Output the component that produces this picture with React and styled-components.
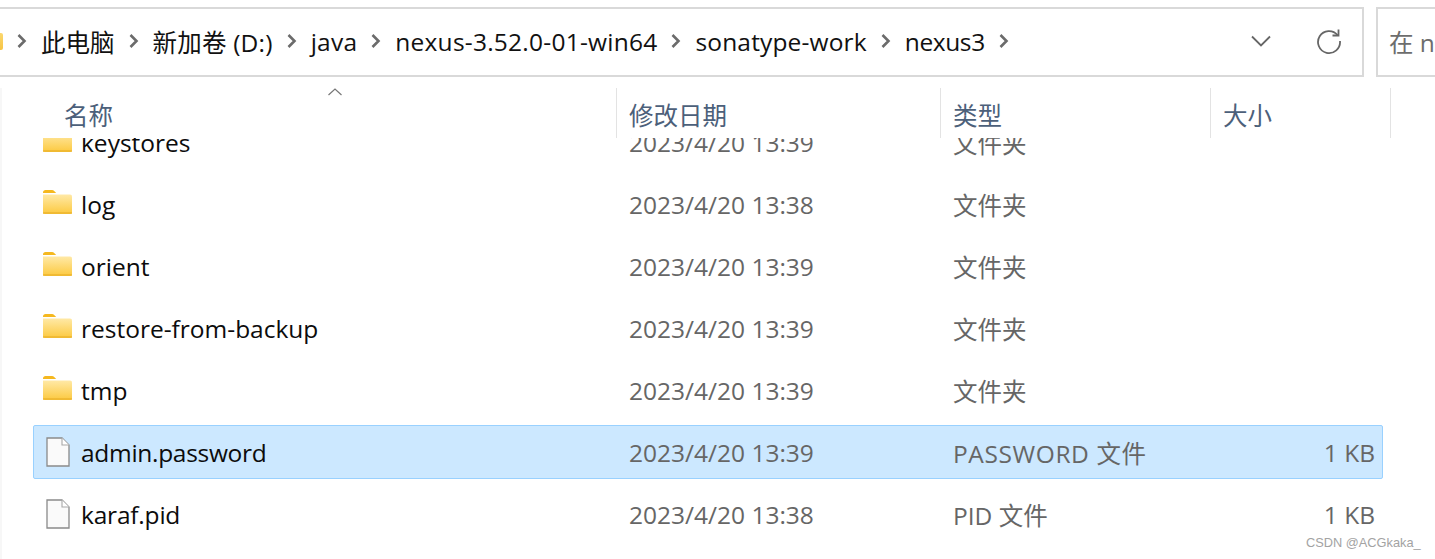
import React from 'react';
import styled, { createGlobalStyle } from 'styled-components';

const crumbs = [
  { label: '此电脑', track: 0 },
  { label: '新加卷 (D:)', track: 0.2 },
  { label: 'java', track: 0.25 },
  { label: 'nexus-3.52.0-01-win64', track: 0.24 },
  { label: 'sonatype-work', track: 0.16 },
  { label: 'nexus3', track: -0.4 },
];

const files = [
  { name: 'keystores', date: '2023/4/20 13:39', type: '文件夹', kind: 'folder' },
  { name: 'log', date: '2023/4/20 13:38', type: '文件夹', kind: 'folder' },
  { name: 'orient', date: '2023/4/20 13:39', type: '文件夹', kind: 'folder' },
  { name: 'restore-from-backup', date: '2023/4/20 13:39', type: '文件夹', kind: 'folder' },
  { name: 'tmp', date: '2023/4/20 13:39', type: '文件夹', kind: 'folder' },
  { name: 'admin.password', date: '2023/4/20 13:39', type: 'PASSWORD 文件', typeTrack: 0.6, size: '1 KB', kind: 'file', nameTrack: -0.3, selected: true },
  { name: 'karaf.pid', date: '2023/4/20 13:38', type: 'PID 文件', size: '1 KB', kind: 'file', nameTrack: -0.2 },
];

const GlobalStyle = createGlobalStyle`
  html, body {
    margin: 0;
    height: 559px;
    overflow: hidden;
    background: #fff;
  }
  body {
    font-family: "Open Sans", "Noto Sans CJK SC", sans-serif;
  }
`;

const Page = styled.div`
  position: relative;
  width: 1435px;
  height: 559px;
  overflow: hidden;
  font-size: 24.5px;
`;

const Toolbar = styled.div`
  display: flex;
  gap: 12px;
  height: 70px;
  padding-top: 7px;
  margin-left: -2px;
  width: 1500px;
`;

const AddressBar = styled.div`
  display: flex;
  align-items: center;
  box-sizing: border-box;
  width: 1366px;
  flex-shrink: 0;
  border: 2px solid #d9d9d9;
  border-left: 0;
  padding-bottom: 2px;
`;

const FolderStub = styled.div`
  width: 5px;
  height: 17px;
  background: linear-gradient(#fbd86f, #f7c444);
  border-radius: 0 2px 2px 0;
`;

const Crumb = styled.span`
  color: #111;
  white-space: nowrap;
  letter-spacing: ${(p) => p.$track}px;
`;

const CrumbArrow = styled.svg`
  width: 12px;
  height: 18px;
  margin: 0 13px;
  flex-shrink: 0;
  fill: none;
  stroke: #6b6b6b;
  stroke-width: 2.6;
`;

const BarButtons = styled.div`
  display: flex;
  align-items: center;
  gap: 42px;
  margin-left: auto;
  margin-right: 20px;
`;

const BarIcon = styled.svg`
  width: 26px;
  height: 26px;
  fill: none;
  stroke: #666;
  stroke-width: 1.8;
`;

const SearchBox = styled.div`
  display: flex;
  align-items: center;
  box-sizing: border-box;
  flex: 1;
  border: 2px solid #d9d9d9;
  padding: 0 0 2px 11px;
  color: #6d6d6d;
  white-space: nowrap;
`;

const Content = styled.div`
  box-sizing: border-box;
  height: 471px;
  margin-top: 11px;
  border-left: 2px solid #f7f7f7;
  display: flex;
  flex-direction: column;
`;

const HeaderRow = styled.div`
  position: relative;
  display: grid;
  grid-template-columns: 614px 324px 270px 180px 1fr;
  height: 50px;
  flex-shrink: 0;
  background: #fff;
`;

const HeaderCell = styled.div`
  box-sizing: border-box;
  padding-left: 12px;
  padding-top: 13px;
  color: #4c607a;
  line-height: 30px;
  border-left: 1px solid #e3e3e3;
`;

const NameHeaderCell = styled(HeaderCell)`
  padding-left: 62px;
  border-left: 0;
`;

const SortArrow = styled.svg`
  position: absolute;
  left: 325px;
  top: -1px;
  width: 16px;
  height: 10px;
  fill: none;
  stroke: #777;
  stroke-width: 1.2;
`;

const ListViewport = styled.div`
  flex: 1;
  overflow: hidden;
  padding-left: 31px;
`;

const List = styled.div`
  display: flex;
  flex-direction: column;
  gap: 8px;
  margin-top: -23px;
  width: 1350px;
`;

const Row = styled.div`
  box-sizing: border-box;
  display: grid;
  grid-template-columns: 595px 324px 1fr auto;
  align-items: center;
  height: 54px;
  padding: 1px 7px 0 0;
  border: 1px solid ${(p) => (p.$selected ? '#99d1ff' : 'transparent')};
  border-radius: 2px;
  background: ${(p) => (p.$selected ? '#cce8ff' : 'transparent')};
`;

const NameCell = styled.div`
  display: flex;
  align-items: center;
  color: #0c0c0c;
  white-space: nowrap;
  letter-spacing: ${(p) => p.$track || 0}px;
`;

const IconSlot = styled.span`
  display: flex;
  justify-content: center;
  width: 29px;
  margin: ${(p) => (p.$folder ? '-5px 9px 0' : '-2px 9px 0')};
  flex-shrink: 0;
`;

const InfoCell = styled.div`
  color: #666;
  white-space: nowrap;
  letter-spacing: ${(p) => p.$track || 0}px;
`;

const Watermark = styled.div`
  position: absolute;
  left: 1306px;
  top: 535px;
  font-family: "Liberation Sans", sans-serif;
  font-size: 12.8px;
  line-height: 16px;
  color: #a3a3a3;
`;

const FolderIcon = () => (
  <svg width="29" height="24" viewBox="0 0 29 24">
    <defs>
      <linearGradient id="folderFill" x1="0" y1="0" x2="0" y2="1">
        <stop offset="0" stopColor="#ffe9a6" />
        <stop offset="1" stopColor="#fcc93f" />
      </linearGradient>
    </defs>
    <path d="M0 2.500C0 1 1 0 2.500 0H9c1 0 1.600.4 2.200 1l2 2H0z" fill="#f5b81f" />
    <path d="M0 4.500h27c1.200 0 2 .8 2 2V22c0 1.200-.8 2-2 2H2c-1.200 0-2-.8-2-2z" fill="url(#folderFill)" />
    <path d="M0 23h29" stroke="#edb42e" strokeWidth="1.500" />
  </svg>
);

const FileIcon = () => (
  <svg width="24" height="30" viewBox="0 0 24 30">
    <path d="M1 1h15l7 7v21H1z" fill="#fafafa" stroke="#8a8a8a" strokeWidth="1.300" />
    <path d="M16 1v7h7" fill="#fff" stroke="#a8a8a8" strokeWidth="1.100" />
  </svg>
);

export default function App() {
  return (
    <Page>
      <GlobalStyle />
      <Toolbar>
        <AddressBar>
          <FolderStub />
          {crumbs.map((crumb) => (
            <React.Fragment key={crumb.label}>
              <CrumbArrow viewBox="0 0 12 18">
                <path d="M2.500 3l6 6-6 6" />
              </CrumbArrow>
              <Crumb $track={crumb.track}>{crumb.label}</Crumb>
            </React.Fragment>
          ))}
          <CrumbArrow viewBox="0 0 12 18">
            <path d="M2.500 3l6 6-6 6" />
          </CrumbArrow>
          <BarButtons>
            <BarIcon viewBox="0 0 26 26">
              <path d="M4 8.500l9 9 9-9" />
            </BarIcon>
            <BarIcon viewBox="0 0 26 26">
              <path d="M21.500 7A11 11 0 1 0 24 13" />
              <path d="M22.500 1.500V7.500H16.500" />
            </BarIcon>
          </BarButtons>
        </AddressBar>
        <SearchBox>在 n</SearchBox>
      </Toolbar>
      <Content>
        <HeaderRow>
          <NameHeaderCell>名称</NameHeaderCell>
          <HeaderCell>修改日期</HeaderCell>
          <HeaderCell>类型</HeaderCell>
          <HeaderCell>大小</HeaderCell>
          <HeaderCell />
          <SortArrow viewBox="0 0 16 10">
            <path d="M1.500 8L8 2l6.500 6" />
          </SortArrow>
        </HeaderRow>
        <ListViewport>
          <List>
            {files.map((file) => (
              <Row key={file.name} $selected={file.selected}>
                <NameCell $track={file.nameTrack}>
                  <IconSlot $folder={file.kind === 'folder'}>
                    {file.kind === 'folder' ? <FolderIcon /> : <FileIcon />}
                  </IconSlot>
                  {file.name}
                </NameCell>
                <InfoCell>{file.date}</InfoCell>
                <InfoCell $track={file.typeTrack}>{file.type}</InfoCell>
                <InfoCell>{file.size}</InfoCell>
              </Row>
            ))}
          </List>
        </ListViewport>
      </Content>
      <Watermark>CSDN @ACGkaka_</Watermark>
    </Page>
  );
}
